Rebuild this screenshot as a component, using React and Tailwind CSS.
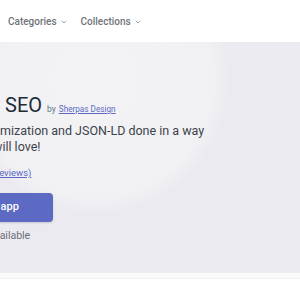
export default function App() {
  const Chevron = () => (
    <svg width="6" height="4" viewBox="0 0 6 4" className="ml-[4px] mt-[1px]" fill="none">
      <path d="M0.8 0.8 L3 3 L5.2 0.8" stroke="#a3a5ab" strokeWidth="1" />
    </svg>
  );
  return (
    <div className="w-[300px] h-[300px] overflow-hidden bg-white font-['Roboto',sans-serif]">
      <header className="h-[42px] flex items-center pl-[8px] gap-[14px] bg-white">
        <div className="flex items-center text-[10px] font-medium text-[#707379]">
          Categories
          <Chevron />
        </div>
        <div className="flex items-center text-[10px] font-medium text-[#707379]">
          Collections
          <Chevron />
        </div>
      </header>
      <section className="h-[231px] pt-[51px] bg-[radial-gradient(circle_at_95px_38px,#f3f3f6_0px,#f1f1f4_118px,#ebeaf0_134px)] whitespace-nowrap">
        <div className="flex items-baseline leading-[24px]">
          <span className="ml-[5px] text-[20px] text-[#212b36]">SEO</span>
          <span className="ml-[5px] text-[8.5px] text-[#637381]">by</span>
          <a className="ml-[3px] text-[8.2px] text-[#5c6ac4] underline">Sherpas Design</a>
        </div>
        <div className="mt-[2px] text-[12.5px] leading-[16px] text-[#3d434b]">
          <div>mization and JSON-LD done in a way</div>
          <div className="ml-[-7px]">will love!</div>
        </div>
        <div className="mt-[11px] ml-[-4px] text-[9.5px] leading-[14px] text-[#5c6ac4] underline">reviews)</div>
        <button className="mt-[13px] ml-[-56px] w-[109px] h-[29px] rounded-[4px] bg-[#5c6ac4] text-white text-[11px] font-medium flex items-center justify-center shadow-[0_1px_2px_rgba(0,0,0,0.15)]">
          Add app
        </button>
        <div className="mt-[6px] ml-[-11px] text-[10.5px] leading-[15px] text-[#6b6e75]">available</div>
      </section>
      <div className="h-[6px] bg-[#fafafa] border-b border-[#f1f1f1]" />
    </div>
  );
}
